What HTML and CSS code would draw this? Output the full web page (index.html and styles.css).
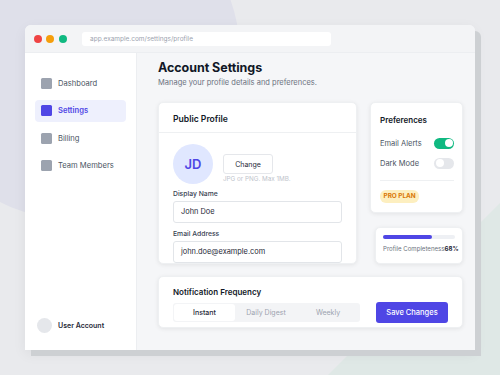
FILE: index.html
```html
<!DOCTYPE html>
<html>
<head>
<meta charset="utf-8">
<link rel="stylesheet" href="styles.css">
</head>
<body>
<div class="scene">
  <div class="blob blob-a"></div>
  <div class="blob blob-b"></div>
  <div class="window">
    <div class="titlebar">
      <span class="dot red"></span><span class="dot yellow"></span><span class="dot green"></span>
      <div class="url">app.example.com/settings/profile</div>
    </div>
    <div class="win-body">
      <aside class="sidebar">
        <nav class="nav">
          <div class="nav-item"><span class="nav-icon"></span>Dashboard</div>
          <div class="nav-item active"><span class="nav-icon"></span>Settings</div>
          <div class="nav-item"><span class="nav-icon"></span>Billing</div>
          <div class="nav-item"><span class="nav-icon"></span>Team Members</div>
        </nav>
        <div class="user"><span class="user-avatar"></span>User Account</div>
      </aside>
      <main class="main">
        <h1 class="title">Account Settings</h1>
        <p class="subtitle">Manage your profile details and preferences.</p>
        <div class="grid">
          <section class="card profile">
            <div class="card-head">Public Profile</div>
            <div class="profile-body">
              <div class="avatar-row">
                <div class="avatar">JD</div>
                <div class="avatar-side">
                  <button class="btn-change">Change</button>
                  <div class="hint">JPG or PNG. Max 1MB.</div>
                </div>
              </div>
              <label class="label">Display Name</label>
              <div class="input">John Doe</div>
              <label class="label label-2">Email Address</label>
              <div class="input">john.doe@example.com</div>
            </div>
          </section>
          <div class="side-col">
            <section class="card prefs">
              <div class="prefs-title">Preferences</div>
              <div class="pref-row">Email Alerts<span class="toggle on"><span class="knob"></span></span></div>
              <div class="pref-row">Dark Mode<span class="toggle"><span class="knob"></span></span></div>
              <div class="divider"></div>
              <div class="badge">PRO PLAN</div>
            </section>
            <section class="card progress-card">
              <div class="bar"><div class="bar-fill" style="width:68%"></div></div>
              <div class="progress-text"><span class="ptxt">Profile Completeness</span><b>68%</b></div>
            </section>
          </div>
        </div>
        <section class="card notif">
          <div class="notif-title">Notification Frequency</div>
          <div class="notif-row">
            <div class="segmented">
              <span class="seg active">Instant</span>
              <span class="seg">Daily Digest</span>
              <span class="seg">Weekly</span>
            </div>
            <button class="btn-save">Save Changes</button>
          </div>
        </section>
      </main>
    </div>
  </div>
</div>
</body>
</html>
```

FILE: styles.css
```css
* { box-sizing: border-box; }
html, body { margin: 0; padding: 0; }
body {
  width: 500px; height: 375px; overflow: hidden;
  font-family: Inter, "Noto Sans", sans-serif;
  background: #e9eaed;
  color: #1f2937;
}
.scene { position: relative; width: 500px; height: 375px; padding: 25px 0 0 25px; overflow: hidden; }
.blob { position: absolute; border-radius: 50%; }
.blob-a { width: 330px; height: 330px; left: -90px; top: -110px; background: #dfe0ea; }
.blob-b { width: 420px; height: 420px; left: 330px; top: 250px; background: #dfe8e6; transform: rotate(45deg); border-radius: 30px; }
.window {
  position: relative;
  width: 450px; height: 325px;
  background: #f5f6f8;
  border-radius: 6px 6px 0 0;
  box-shadow: 6px 6px 0 #cdd0d3, 0 4px 14px rgba(0,0,0,0.06);
  display: flex; flex-direction: column;
  overflow: hidden;
}
.titlebar {
  height: 28px; background: #f3f4f6;
  display: flex; align-items: center; padding-left: 8.5px;
  border-bottom: 1px solid #eceef1;
}
.dot { width: 8px; height: 8px; border-radius: 50%; margin-right: 4.5px; }
.red { background: #ef4444; }
.yellow { background: #f59e0b; }
.green { background: #10b981; }
.url {
  margin-left: 11px; width: 249px; height: 14px; background: #fff; border-radius: 3px;
  font-size: 6.5px; color: #9ca3af; line-height: 14px; padding-left: 8px;
}
.win-body { flex: 1; display: flex; min-height: 0; }
.sidebar {
  width: 112px; background: #fff; border-right: 1px solid #eceef1;
  display: flex; flex-direction: column; padding: 19px 10px 17px 10px;
}
.nav { display: flex; flex-direction: column; gap: 5.5px; }
.nav-item {
  height: 22px; display: flex; align-items: center; padding-left: 6px;
  font-size: 7.6px; color: #4b5563; border-radius: 4px;
}
.nav-icon { width: 11px; height: 11px; background: #9ca3af; border-radius: 1.5px; margin-right: 6px; }
.nav-item.active { background: #eef0fd; color: #4f46e5; font-weight: 600; }
.nav-item.active .nav-icon { background: #4f46e5; }
.user { margin-top: auto; display: flex; align-items: center; font-size: 7px; font-weight: 600; color: #1f2937; padding-left: 2px; }
.user-avatar { width: 15px; height: 15px; border-radius: 50%; background: #e5e7eb; margin-right: 6px; }
.main { flex: 1; padding: 6px 12px 0 21px; }
.title { margin: 0; font-size: 12.5px; font-weight: 700; color: #111827; line-height: 18px; letter-spacing: -0.05px; }
.subtitle { margin: 0; font-size: 7.5px; color: #6b7280; line-height: 12px; }
.grid { display: grid; grid-template-columns: 199px 93px; column-gap: 13px; margin-top: 13px; }
.card { background: #fff; border-radius: 5px; box-shadow: 0 1px 4px rgba(0,0,0,0.08); border: 1px solid #eef0f2; }
.profile { height: 162px; overflow: hidden; }
.card-head { height: 30px; line-height: 12px; padding-top: 10px; padding-left: 14px; font-size: 8.6px; font-weight: 600; color: #111827; border-bottom: 1px solid #eef0f2; }
.profile-body { padding: 11px 14px 0 14px; }
.avatar-row { display: flex; }
.avatar { width: 40px; height: 40px; border-radius: 50%; background: #e0e7ff; color: #4f46e5; font-size: 13px; font-weight: 600; display: flex; align-items: center; justify-content: center; }
.avatar-side { margin-left: 10px; padding-top: 10px; }
.btn-change { width: 50px; height: 20px; background: #fff; border: 1px solid #e5e7eb; border-radius: 3px; font-family: inherit; font-size: 7px; color: #1f2937; padding: 0; display: block; }
.hint { font-size: 6.3px; color: #c0c4cc; margin-top: 1px; line-height: 9px; white-space: nowrap; }
.label { display: block; font-size: 6.8px; color: #374151; font-weight: 500; line-height: 10px; margin-top: 5px; margin-bottom: 2px; }
.label-2 { margin-top: 6px; }
.input { height: 22px; border: 1px solid #e2e5e9; border-radius: 3px; font-size: 7.4px; color: #1f2937; line-height: 20px; padding-left: 7px; }
.side-col { display: flex; flex-direction: column; gap: 14px; }
.prefs { height: 111px; padding: 11px 8px 0 9px; }
.prefs-title { font-size: 8px; font-weight: 600; color: #111827; line-height: 12px; margin-bottom: 7px; }
.pref-row { display: flex; align-items: center; justify-content: space-between; font-size: 7.5px; color: #4b5563; height: 20px; }
.toggle { width: 20px; height: 11px; border-radius: 6px; background: #e5e7eb; position: relative; }
.toggle .knob { position: absolute; top: 1.5px; left: 1.5px; width: 8px; height: 8px; border-radius: 50%; background: #fff; }
.toggle.on { background: #10b981; }
.toggle.on .knob { left: 10.5px; }
.divider { height: 1px; background: #eef0f2; margin: 7px 0 9px; }
.badge { width: max-content; background: #fdefc0; color: #d97706; font-size: 6.4px; font-weight: 700; line-height: 13px; padding: 0 3.5px; border-radius: 6px; }
.progress-card { margin-left: 5px; height: 37px; padding: 7px 7px 0 7px; }
.bar { height: 4px; background: #eef0f4; border-radius: 2px; }
.bar-fill { height: 4px; background: #4f46e5; border-radius: 2px; }
.progress-text { display: flex; font-size: 6.1px; color: #6b7280; margin-top: 5px; white-space: nowrap; line-height: 9px; }
.progress-text b { color: #1f2937; font-weight: 700; }
.notif { margin-top: 12px; height: 52px; padding: 10px 14px 0 14px; }
.notif-title { font-size: 8px; font-weight: 600; color: #111827; line-height: 11px; }
.notif-row { display: flex; align-items: center; justify-content: space-between; margin-top: 4px; }
.segmented { width: 187px; height: 19px; background: #f3f4f6; border-radius: 3px; display: flex; padding: 1px; }
.seg { flex: 1; display: flex; align-items: center; justify-content: center; font-size: 7px; color: #9ca3af; border-radius: 3px; }
.seg.active { background: #fff; color: #1f2937; font-weight: 500; flex: 0 0 61px; }
.btn-save { width: 72px; height: 21px; background: #4f46e5; color: #fff; border: none; border-radius: 3px; font-family: inherit; font-size: 7.5px; font-weight: 500; padding: 0; margin-right: 0; }
```
